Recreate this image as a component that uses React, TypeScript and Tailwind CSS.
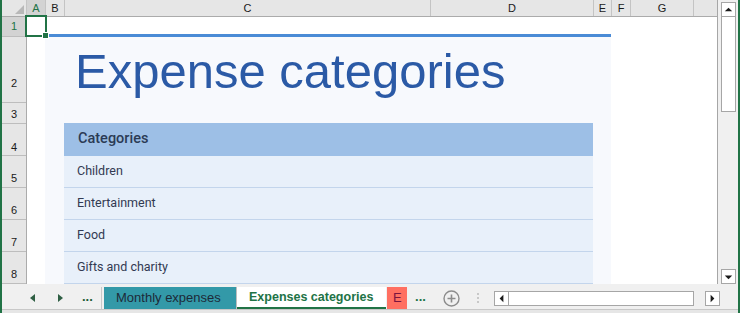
import React from 'react';

const cols = [
  { label: 'A', w: 'w-[19px]', active: true },
  { label: 'B', w: 'w-[19px]' },
  { label: 'C', w: 'w-[366px]' },
  { label: 'D', w: 'w-[163px]' },
  { label: 'E', w: 'w-[18px]' },
  { label: 'F', w: 'w-[19px]' },
  { label: 'G', w: 'w-[63px]' },
];

const rows = [
  { n: 1, h: 'h-[20px]', pb: 'pb-[4px]', active: true },
  { n: 2, h: 'h-[66px]', pb: 'pb-[13px]' },
  { n: 3, h: 'h-[21px]', pb: 'pb-[3px]' },
  { n: 4, h: 'h-[32px]', pb: 'pb-[2px]' },
  { n: 5, h: 'h-[32px]', pb: 'pb-[3px]' },
  { n: 6, h: 'h-[32px]', pb: 'pb-[3px]' },
  { n: 7, h: 'h-[32px]', pb: 'pb-[3px]' },
  { n: 8, h: 'h-[32px]', pb: 'pb-[3px]' },
];

const categories = ['Children', 'Entertainment', 'Food', 'Gifts and charity'];

function ScrollButton({ dir, className = '' }: { dir: 'up' | 'down' | 'left' | 'right'; className?: string }) {
  const pts = {
    up: '3,9 11,9 7,5',
    down: '3,6 11,6 7,10',
    left: '9,3 9,11 5,7',
    right: '5,3 5,11 9,7',
  }[dir];
  return (
    <div className={`w-[15px] h-[15px] bg-white border border-[#a6a6a6] flex items-center justify-center ${className}`}>
      <svg width="13" height="13" viewBox="0 0 14 14">
        <polygon points={pts} fill="#1a1a1a" />
      </svg>
    </div>
  );
}

export default function App() {
  return (
    <div className="relative w-[740px] h-[313px] flex flex-col bg-[#f0f0f0] border-l-2 border-r-2 border-[#217346] overflow-hidden font-['Liberation_Sans',Arial,sans-serif] text-[#1a1a1a]">
      {/* Sheet + vertical scrollbar */}
      <div className="flex h-[284px]">
        <div className="w-[716px] flex flex-col bg-white border-r border-[#a6a6a6]">
          {/* Column headers */}
          <div className="flex h-[17px] bg-[#e6e6e6] border-b border-[#ababab] text-[11px]">
            <div className="w-[25px] border-r border-[#c4c4c4] relative">
              <svg className="absolute right-[2px] bottom-[2px]" width="9" height="9" viewBox="0 0 9 9">
                <polygon points="9,0 9,9 0,9" fill="#b8b8b8" />
              </svg>
            </div>
            {cols.map((c) => (
              <div
                key={c.label}
                className={`${c.w} shrink-0 border-r border-[#c4c4c4] flex items-center justify-center ${
                  c.active ? 'bg-[#d3d3d3] text-[#217346]' : ''
                }`}
              >
                {c.label}
              </div>
            ))}
            <div className="flex-1" />
          </div>

          {/* Body */}
          <div className="flex flex-1">
            <div className="w-[25px] flex flex-col bg-[#e6e6e6] border-r border-[#ababab] text-[11px] leading-[11px]">
              {rows.map((r) => (
                <div
                  key={r.n}
                  className={`${r.h} ${r.pb} border-b border-[#bdbdbd] flex items-end justify-center ${
                    r.active ? 'bg-[#d3d3d3] text-[#217346]' : ''
                  }`}
                >
                  {r.n}
                </div>
              ))}
            </div>

            <div className="flex-1 overflow-hidden pl-[18px]">
              <div className="w-[566px] h-full flex flex-col">
                <div className="h-[17px]" />
                <div className="h-[3px] bg-[#4a8bd6]" />
                <div className="flex-1 bg-[#f7f9fd] flex flex-col">
                  <div className="h-[86px] pl-[30px] pt-[10px]">
                    <h1 className="text-[49px] leading-[49px] text-[#2b5aa6] font-normal">Expense categories</h1>
                  </div>
                  <div className="ml-[19px] w-[529px] font-['Roboto',Arial,sans-serif]">
                    <div className="h-[33px] bg-[#9dbfe6] flex items-center pl-[14px] pb-[1px] text-[14.5px] font-medium text-[#2b3b55]">
                      Categories
                    </div>
                    {categories.map((c) => (
                      <div
                        key={c}
                        className="h-[32px] bg-[#e8f0fa] border-b border-[#c3d5ec] flex items-center pl-[13px] text-[12.5px] text-[#323a52]"
                      >
                        {c}
                      </div>
                    ))}
                  </div>
                </div>
              </div>
            </div>
          </div>
        </div>

        {/* Vertical scrollbar */}
        <div className="w-[20px] flex flex-col pl-[3px] pt-[2px]">
          <ScrollButton dir="up" />
          <div className="w-[15px] h-[95px] bg-white border border-[#a6a6a6] border-t-0" />
          <div className="flex-1" />
          <ScrollButton dir="down" />
        </div>
      </div>

      {/* Sheet tabs */}
      <div className="flex h-[25px] items-stretch pt-[3px] text-[13px]">
        <div className="w-[25px]" />
        <div className="w-[10px] flex items-center justify-center">
          <svg width="5" height="8" viewBox="0 0 5 8">
            <polygon points="5,0 5,8 0,4" fill="#2f5f44" />
          </svg>
        </div>
        <div className="w-[18px]" />
        <div className="w-[10px] flex items-center justify-center">
          <svg width="5" height="8" viewBox="0 0 5 8">
            <polygon points="0,0 0,8 5,4" fill="#2f5f44" />
          </svg>
        </div>
        <div className="w-[36px] flex items-center pl-[17px] font-bold text-[#1e5c36] pb-[2px]">...</div>
        <div className="w-[1px] bg-[#c8c8c8]" />
        <div className="w-[2px]" />
        <div className="w-[132px] bg-[#3399a8] flex items-center pl-[12px] text-[#1d2a38]">Monthly expenses</div>
        <div className="w-[1px] bg-[#bdbdbd]" />
        <div className="w-[149px] bg-white border-b-2 border-[#217346] flex items-center pl-[12px] font-bold text-[12.5px] text-[#217346]">
          Expenses categories
        </div>
        <div className="w-[1px]" />
        <div className="w-[20px] bg-[#ff6f61] flex items-center pl-[6px] text-[#7a1540]">E</div>
        <div className="w-[27px] flex items-center justify-center font-bold text-[#217346] pb-[2px]">...</div>
        <div className="w-[34px] flex items-center justify-center">
          <svg width="17" height="17" viewBox="0 0 17 17">
            <circle cx="8.5" cy="8.5" r="7.5" fill="none" stroke="#8c8c8c" strokeWidth="1.4" />
            <path d="M8.5 4.5v8M4.5 8.5h8" stroke="#8c8c8c" strokeWidth="1.6" />
          </svg>
        </div>
        <div className="w-[9px]" />
        <div className="w-[2px] flex flex-col justify-center gap-[2px]">
          <div className="w-[2px] h-[2px] bg-[#c8c8c8]" />
          <div className="w-[2px] h-[2px] bg-[#c8c8c8]" />
          <div className="w-[2px] h-[2px] bg-[#c8c8c8]" />
        </div>
        <div className="w-[15px]" />
        <div className="flex items-start pt-[4px]">
          <ScrollButton dir="left" />
          <div className="w-[184px] h-[15px] bg-white border-y border-[#a6a6a6]" />
          <div className="w-[12px] h-[15px] bg-[#f0f0f0] border-l border-[#a6a6a6]" />
          <ScrollButton dir="right" />
        </div>
      </div>
      <div className="flex-1 bg-[#e6e6e6] border-t border-[#c8c8c8]" />

      {/* Active cell selection */}
      <div className="absolute left-[23px] top-[15px] w-[22px] h-[22px] border-2 border-[#217346]" />
      <div className="absolute left-[41px] top-[33px] w-[5px] h-[5px] bg-[#217346] outline outline-1 outline-white" />
    </div>
  );
}
